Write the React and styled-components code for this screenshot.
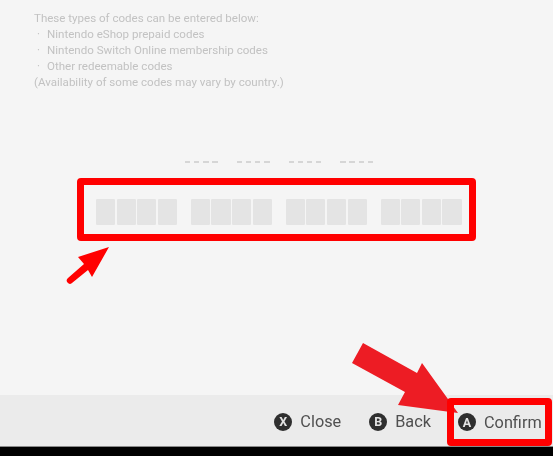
import React from "react";
import styled, { createGlobalStyle } from "styled-components";

const GlobalStyle = createGlobalStyle`
  html, body {
    margin: 0;
    padding: 0;
    background: #000;
  }
`;

const Screen = styled.div`
  position: relative;
  width: 553px;
  height: 456px;
  overflow: hidden;
  display: flex;
  flex-direction: column;
  background: #000;
  font-family: Roboto, "Liberation Sans", sans-serif;
`;

const Main = styled.div`
  height: 395px;
  display: flex;
  flex-direction: column;
  background: #f5f5f5;
`;

const Intro = styled.div`
  margin: 10px 0 0 34px;
  font-size: 11.55px;
  line-height: 16px;
  color: #c2c2c2;
  filter: blur(0.45px);
`;

const Bullet = styled.div`
  display: flex;
  padding-left: 3px;
`;

const Dot = styled.span`
  width: 10px;
`;

const Dashes = styled.div`
  display: flex;
  justify-content: center;
  gap: 19px;
  margin: 71px 0 0 5px;
  filter: blur(0.4px);
`;

const DashGroup = styled.div`
  display: flex;
  gap: 3.5px;
`;

const Dash = styled.span`
  width: 5.6px;
  height: 2px;
  background: #d6d6d6;
`;

const CodeBox = styled.div`
  align-self: center;
  box-sizing: border-box;
  width: 399px;
  height: 63px;
  margin-top: 15px;
  padding: 4px 0 0 12px;
  display: flex;
  align-items: center;
  gap: 14px;
  border: 7px solid #ff0000;
  border-radius: 4px;
`;

const CellGroup = styled.div`
  display: flex;
  gap: 1.5px;
`;

const Cell = styled.div`
  width: 19.1px;
  height: 26px;
  border-radius: 1px;
  background: #e4e4e4;
  filter: blur(0.4px);
`;

const Footer = styled.div`
  height: 52px;
  box-sizing: border-box;
  display: flex;
  justify-content: flex-end;
  align-items: center;
  padding-top: 2px;
  background: #ebebeb;
  border-bottom: 1px solid #8a8a8a;
`;

const Action = styled.div`
  display: flex;
  align-items: center;
  gap: 8px;
  margin-right: ${(p) => p.$gap || 0}px;
  font-size: 16.3px;
  color: #505050;
  filter: blur(0.3px);
`;

const Badge = styled.span`
  width: 18px;
  height: 18px;
  border-radius: 50%;
  background: #2f2f2f;
  color: #e4e4e4;
  font-size: 12.5px;
  font-weight: 700;
  display: flex;
  align-items: center;
  justify-content: center;
`;

const ConfirmBox = styled.div`
  position: relative;
  z-index: 2;
  align-self: flex-start;
  box-sizing: border-box;
  width: 105px;
  height: 48px;
  margin: 1px 1px 0 0;
  padding-left: 4px;
  display: flex;
  align-items: center;
  border: 7px solid #ff0000;
  border-radius: 4px;
`;

const Overlay = styled.svg`
  position: absolute;
  z-index: 1;
  left: 0;
  top: 0;
  pointer-events: none;
`;

const CODE_GROUPS = [0, 1, 2, 3];
const CHARS = [0, 1, 2, 3];

const App = () => {
  return (
    <Screen>
      <GlobalStyle />
      <Main>
        <Intro>
          <div>These types of codes can be entered below:</div>
          <Bullet><Dot>·</Dot>Nintendo eShop prepaid codes</Bullet>
          <Bullet><Dot>·</Dot>Nintendo Switch Online membership codes</Bullet>
          <Bullet><Dot>·</Dot>Other redeemable codes</Bullet>
          <div>(Availability of some codes may vary by country.)</div>
        </Intro>
        <Dashes>
          {CODE_GROUPS.map((g) => (
            <DashGroup key={g}>
              {CHARS.map((c) => <Dash key={c} />)}
            </DashGroup>
          ))}
        </Dashes>
        <CodeBox>
          {CODE_GROUPS.map((g) => (
            <CellGroup key={g}>
              {CHARS.map((c) => <Cell key={c} />)}
            </CellGroup>
          ))}
        </CodeBox>
      </Main>
      <Footer>
        <Action $gap={28}><Badge>X</Badge>Close</Action>
        <Action $gap={16}><Badge>B</Badge>Back</Action>
        <ConfirmBox>
          <Action><Badge>A</Badge>Confirm</Action>
        </ConfirmBox>
      </Footer>
      <Overlay width="553" height="456" viewBox="0 0 553 456">
        <path
          d="M109 247 L78 257 L84 264 L68 278 A2.5 2.5 0 0 0 72 283 L88 270 L92 277 Z"
          fill="#ff0000"
        />
        <path
          d="M363 343 L352 363 L405 392 L398 405 L458 413 L422 363 L417 373 Z"
          fill="#ed1c24"
        />
      </Overlay>
    </Screen>
  );
};

export default App;
